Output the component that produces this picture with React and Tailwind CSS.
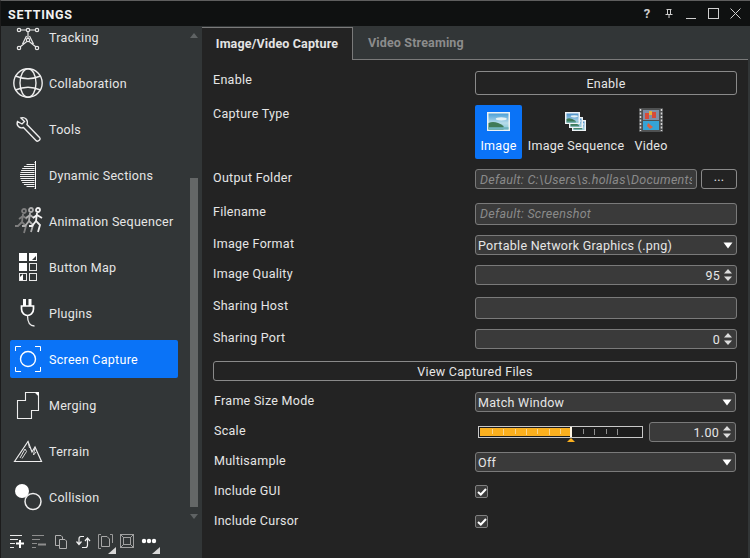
import React from "react";

const W = { fill: "none", stroke: "#e8e8e8", strokeWidth: 1.2 };

const Ic = ({ children }) => (
  <svg width="34" height="34" viewBox="0 0 34 34" className="shrink-0">{children}</svg>
);

const stripes = [];
for (let y = 4; y <= 30; y += 2) {
  const d = Math.sqrt(Math.max(0, 169 - (y - 17) * (y - 17))) * 14 / 13;
  stripes.push(`M${(24 - d).toFixed(1)} ${y + 0.5}H24.5`);
}

const icons = {
  tracking: (
    <Ic>
      <g {...W}>
        <path d="M10.500 10H16M20 10H25.500M18 12V18M16.800 21.500L10 27M19.200 21.500L26 27M16.500 16L12.500 24M19.500 16L23.500 24" />
        <circle cx="9" cy="10" r="1.700" /><circle cx="27" cy="10" r="1.700" /><circle cx="18" cy="10" r="1.700" />
        <circle cx="18" cy="20" r="1.700" /><circle cx="9" cy="28" r="1.700" /><circle cx="27" cy="28" r="1.700" />
      </g>
    </Ic>
  ),
  collab: (
    <Ic>
      <g fill="none" stroke="#eeeeee" strokeWidth="1.400">
        <circle cx="18" cy="17" r="14.200" /><ellipse cx="18" cy="17" rx="8" ry="14.200" />
        <path d="M5.500 10Q18 15.500 30.500 10M5.500 24Q18 18.500 30.500 24" />
      </g>
    </Ic>
  ),
  tools: (
    <Ic>
      <path d="M11 6L14.500 9.500L12 12L7.500 9.500C6 13.500 9.500 17 13.500 15.500L26 28.500C28 30.500 31.500 27 29.500 25.500L17 12.500C18.500 8 15 4.500 11 6Z" fill="none" stroke="#eeeeee" strokeWidth="1.400" />
    </Ic>
  ),
  dynamic: (
    <Ic>
      <path d={stripes.join("")} stroke="#f2f2f2" strokeWidth="1" />
      <path d="M25.500 3V31" stroke="#ffffff" strokeWidth="1" />
    </Ic>
  ),
  anim: (
    <Ic>
      <g fill="none" strokeWidth="1.800" transform="translate(4 3)">
        <g stroke="#7e7e7e"><circle cx="10" cy="4" r="2" /><path d="M9 7L8 15L12 19L10 26M8 15L4 19H1M9 9L13 12M9 9L5 12" /></g>
        <g stroke="#adadad"><circle cx="17" cy="3" r="2" /><path d="M16 6L15 14L19 18L17 25M15 14L11 19H8M16 8L20 11M16 8L12 11" /></g>
        <g stroke="#f0f0f0"><circle cx="24" cy="3" r="2" /><path d="M23 6L22 14L26 18L24 25M22 14L18 19H15M23 8L28 11M23 8L19 11" /></g>
      </g>
    </Ic>
  ),
  button: (
    <Ic>
      <rect x="9" y="3" width="8" height="8" fill="#fff" />
      <rect x="19" y="3" width="8" height="8" fill="#fff" /><path d="M22 10L26 6V10Z" fill="#323637" />
      <rect x="9" y="13" width="8" height="8" fill="#fff" />
      <rect x="19.500" y="13.500" width="7" height="7" fill="none" stroke="#e8e8e8" />
      <rect x="9.500" y="23.500" width="7" height="7" fill="none" stroke="#e8e8e8" /><path d="M10 30V27L13 24V30Z" fill="#fff" />
      <rect x="19.500" y="23.500" width="7" height="7" fill="none" stroke="#e8e8e8" />
    </Ic>
  ),
  plug: (
    <Ic>
      <path d="M13 3H16V10H13ZM18.500 3H21.500V10H18.500Z" fill="#fff" />
      <path d="M11.500 10H23.500V13C23.500 17.500 20 19.500 17.500 19.500C15 19.500 11.500 17.500 11.500 13Z" fill="none" stroke="#fff" strokeWidth="1.700" />
      <path d="M17.500 19.500C17.500 26 20 30 24.500 30" fill="none" stroke="#e8e8e8" strokeWidth="1.300" />
    </Ic>
  ),
  capture: (
    <Ic>
      <path d="M5.500 9V4.500H11M25 4.500H30.500V9M5.500 25V29.500H11M25 29.500H30.500V25" fill="none" stroke="#fff" strokeWidth="1" />
      <circle cx="18" cy="17" r="7.500" fill="none" stroke="#fff" strokeWidth="1.400" />
    </Ic>
  ),
  merging: (
    <Ic>
      <path d="M15.500 4.500H25.500L28.500 7.500V22.500H21.500V30.500H7.500V12.500H15.500Z" fill="none" stroke="#eeeeee" strokeWidth="1.100" />
      <path d="M25 4H29V8Z" fill="#fff" />
    </Ic>
  ),
  terrain: (
    <Ic>
      <path d="M4.500 27.500L18 7.500L22 18L25 13L31.500 27.500Z" fill="none" stroke="#eeeeee" strokeWidth="1.200" />
      <path d="M10 24L15 15L16.500 17.500L12 24.500M18 7.500L19.500 14M25 13L23.500 21L26 18" fill="none" stroke="#dddddd" strokeWidth="1" />
    </Ic>
  ),
  collision: (
    <Ic>
      <circle cx="12" cy="11" r="7" fill="#fff" />
      <circle cx="23" cy="21.500" r="8" fill="none" stroke="#eeeeee" strokeWidth="1.500" />
    </Ic>
  ),
};

const items = [
  ["Tracking", icons.tracking],
  ["Collaboration", icons.collab],
  ["Tools", icons.tools],
  ["Dynamic Sections", icons.dynamic],
  ["Animation Sequencer", icons.anim],
  ["Button Map", icons.button],
  ["Plugins", icons.plug],
  ["Screen Capture", icons.capture, true],
  ["Merging", icons.merging],
  ["Terrain", icons.terrain],
  ["Collision", icons.collision],
];

const T = ({ children, className = "" }) => <span className={"mt-[2px] " + className}>{children}</span>;

const Row = ({ label, top, h = 20, lx = "w-[262px]", children }) => (
  <div className="flex items-start" style={{ height: h, marginTop: top }}>
    <div className={"pt-px leading-4 shrink-0 " + lx}>{label}</div>
    {children}
  </div>
);

const box = "border border-[#7a7a7a] rounded-[3px] bg-[#3a3a3a] h-5 flex items-center";

const Arrows = () => (
  <svg width="10" height="14" viewBox="0 0 10 14" className="shrink-0">
    <path d="M5 1L9 5.500H1Z" fill="#dddddd" /><path d="M1 8.500H9L5 13Z" fill="#dddddd" />
  </svg>
);

const Spin = ({ value, className = "w-[262px]" }) => (
  <div className={box + " justify-end pr-[3px] gap-[3px] " + className}>
    <T>{value}</T>
    <Arrows />
  </div>
);

const Caret = () => (
  <svg width="10" height="7" viewBox="0 0 10 7" className="shrink-0"><path d="M0.500 0.500H9.500L5 6.500Z" fill="#ffffff" /></svg>
);

const Select = ({ value, className = "w-[261px]" }) => (
  <div className={box + " justify-between pl-[2px] pr-[3px] " + className}>
    <T>{value}</T>
    <Caret />
  </div>
);

const Photo = ({ w, h, x = 0, y = 0, id }) => (
  <g transform={`translate(${x} ${y})`}>
    <rect width={w} height={h} fill="#eef2f5" />
    <rect x="1.500" y="1.500" width={w - 3} height={h - 3} fill={`url(#${id})`} />
    <ellipse cx={w * 0.62} cy={h * 0.36} rx={w * 0.24} ry={h * 0.09} fill="#e4f2f6" />
    <path d={`M1.500 ${h * 0.58}Q${w * 0.35} ${h * 0.42} ${w * 0.72} ${h * 0.74}V${h - 1.500}H1.500Z`} fill="#3f7a57" />
    <rect x="1.500" y={h * 0.8} width={w - 3} height={h * 0.2 - 1.500} fill="#6fb4bf" />
  </g>
);

function ImgIcon() {
  return (
    <svg width="24" height="19" viewBox="0 0 24 19" className="shrink-0">
      <defs><linearGradient id="sky1" x1="0" y1="0" x2="0" y2="1"><stop offset="0" stopColor="#4a9fd8" /><stop offset="0.6" stopColor="#b8dcea" /><stop offset="1" stopColor="#7cc4d6" /></linearGradient></defs>
      <Photo w={23} h={19} id="sky1" />
    </svg>
  );
}

function SeqIcon() {
  return (
    <svg width="22" height="20" viewBox="0 0 22 20" className="shrink-0">
      <defs><linearGradient id="sky2" x1="0" y1="0" x2="0" y2="1"><stop offset="0" stopColor="#4a8fc8" /><stop offset="1" stopColor="#b8dcea" /></linearGradient></defs>
      <Photo w={14} h={11} x={7} y={8} id="sky2" />
      <Photo w={14} h={11} x={4} y={5} id="sky2" />
      <Photo w={15} h={12} x={0} y={0} id="sky2" />
    </svg>
  );
}

function VideoIcon() {
  return (
    <svg width="24" height="24" viewBox="0 0 24 24" className="shrink-0">
      <rect x="0" y="0" width="24" height="24" fill="#4f5152" />
      <path d="M1.500 1V23M22.500 1V23" stroke="#d8d8d8" strokeWidth="1.500" strokeDasharray="2 1.500" />
      <rect x="4" y="2" width="16" height="10" fill="#7f8fa8" />
      <rect x="4" y="13" width="16" height="9" fill="#35a3d6" />
      <path d="M6 5H10V11H6ZM13 4H17V10H13Z" fill="#d64a3a" />
      <path d="M10 3H13V7H10Z" fill="#e3b23c" />
      <path d="M9 15L14 19L11 21L8 18Z" fill="#e0603a" />
    </svg>
  );
}

function Toolbar() {
  const s = { fill: "none", strokeWidth: 1 };
  return (
    <div className="flex items-start h-[30px] shrink-0 pl-[9px] pt-[5px]">
      <svg width="180" height="22" viewBox="0 0 180 22">
        <path d="M0 2.500H12M0 6.500H8M0 10.500H5M0 14.500H4" stroke="#e8e8e8" {...s} />
        <path d="M6 10.500H14M10 7V15" stroke="#fff" strokeWidth="2" />
        <path d="M22 2.500H34M22 6.500H30M22 10.500H27M22 14.500H26" stroke="#8e8e8e" {...s} />
        <path d="M28 11.500H36" stroke="#8e8e8e" strokeWidth="2" />
        <path d="M45.500 2.500H51L52.500 4V12.500H45.500Z" stroke="#b0b0b0" {...s} />
        <path d="M49.500 6.500H55L56.500 8V15.500H49.500Z" stroke="#b0b0b0" fill="#323637" />
        <path d="M74 3.500H71Q69 3.500 69 6V11M66.500 8.500L69 11.500L71.500 8.500M72 14.500H75.500Q77.500 14.500 77.500 12V6M75 8L77.500 5L80 8" stroke="#f0f0f0" fill="none" strokeWidth="1.200" />
        <path d="M91 1.500H88.500V15.500H91M100 1.500H102.500V10" stroke="#9a9a9a" {...s} />
        <path d="M91.500 3.500H97L99.500 6V13.500H91.500Z" stroke="#a8a8a8" {...s} />
        <path d="M106 21H98L106 14Z" fill="#d8d8d8" />
        <rect x="110.500" y="1.500" width="13" height="13" stroke="#a0a0a0" {...s} />
        <rect x="113.500" y="4.500" width="7" height="7" stroke="#a0a0a0" {...s} />
        <path d="M110.500 1.500L113.500 4.500M123.500 1.500L120.500 4.500M110.500 14.500L113.500 11.500M123.500 14.500L120.500 11.500" stroke="#a0a0a0" {...s} />
        <circle cx="134" cy="8" r="2.200" fill="#fff" /><circle cx="139" cy="8" r="2.200" fill="#fff" /><circle cx="144" cy="8" r="2.200" fill="#fff" />
        <path d="M150 21H142L150 14Z" fill="#d8d8d8" />
      </svg>
    </div>
  );
}

const ticks = [0, 1, 2, 3, 4, 5, 6, 8, 9, 10, 11];

export default function App() {
  return (
    <div
      className="w-[750px] h-[558px] overflow-hidden flex flex-col bg-[#323637] text-[#e6e6e6] text-[12.500px] leading-4 tracking-[0.28px] border-t border-t-[#5e5e5e] border-l border-l-[#1c1c1c]"
      style={{ fontFamily: "Roboto, 'Liberation Sans', sans-serif" }}
    >
      <div className="h-[25px] shrink-0 bg-[#0f1111] flex items-center justify-between pl-[7px] pr-[9px]">
        <T className="font-bold text-[12.500px] tracking-[0.700px] text-[#f2f2f2]">SETTINGS</T>
        <div className="flex items-center">
          <span className="w-[8px] font-bold text-[13px] text-center text-[#cfcfcf] mr-[14px] tracking-normal">?</span>
          <svg width="8" height="9" viewBox="0 0 8 9" className="mr-[13px]"><path d="M1.500 0.500H6.500M2.500 0.500V5.500H5.500V0.500M0.500 5.500H7.500M4 5.500V9" stroke="#cfcfcf" fill="none" /></svg>
          <svg width="10" height="10" viewBox="0 0 10 10" className="mr-[12px]"><path d="M0 9.500H10" stroke="#cfcfcf" /></svg>
          <svg width="11" height="11" viewBox="0 0 11 11" className="mr-[11px]"><rect x="0.500" y="0.500" width="10" height="10" stroke="#cfcfcf" fill="none" /></svg>
          <svg width="11" height="11" viewBox="0 0 11 11"><path d="M0.500 0.500L10.500 10.500M10.500 0.500L0.500 10.500" stroke="#cfcfcf" /></svg>
        </div>
      </div>

      <div className="flex flex-1 min-h-0 pt-px">
        <aside className="w-[201px] shrink-0 flex flex-col">
          <div className="flex flex-1 min-h-0">
            <div className="w-[189px] overflow-hidden">
              <div className="-mt-[9px] pl-[9px] flex flex-col gap-2">
                {items.map(([label, icon, active]) => (
                  <div key={label} className={"h-[38px] w-[168px] shrink-0 flex items-center rounded-[2px] " + (active ? "bg-[#0a73f7] text-white" : "")}>
                    <div className="w-[39px] shrink-0 flex items-center">{icon}</div>
                    <T>{label}</T>
                  </div>
                ))}
              </div>
            </div>
            <div className="w-[8px] flex flex-col items-center pt-[6px]">
              <svg width="8" height="5" viewBox="0 0 8 5" className="shrink-0"><path d="M4 0L8 5H0Z" fill="#5f6364" /></svg>
              <div className="w-[8px] h-[329px] shrink-0 bg-[#646767] mt-[140px]" />
              <svg width="8" height="5" viewBox="0 0 8 5" className="shrink-0 mt-[7px]"><path d="M0 0H8L4 5Z" fill="#5f6364" /></svg>
            </div>
          </div>
          <Toolbar />
        </aside>

        <main className="w-[546px] shrink-0 flex flex-col bg-[#232323]">
          <div className="h-[33px] shrink-0 flex bg-[#323637] tracking-[0.150px]">
            <div className="w-[151px] h-[33px] flex items-center justify-center bg-[#232323] border-t border-r border-[#7a7a7a] font-bold text-[#e4e4e4]">Image/Video Capture</div>
            <div className="flex-1 h-[33px] border-b border-[#7a7a7a] flex items-center pl-[15px] font-bold text-[#8c8c8c]">Video Streaming</div>
          </div>

          <div className="pl-[11px]">
            <Row label="Enable" top={11} h={24}>
              <div className="w-[262px] h-6 border border-[#8a8a8a] rounded-[3px] flex items-center justify-center"><T>Enable</T></div>
            </Row>
            <Row label="Capture Type" top={10} h={54}>
              <div className="flex">
                <div className="w-[47px] h-[54px] rounded-[2px] bg-[#0a73f7] text-white flex flex-col items-center pt-[7px]">
                  <ImgIcon />
                  <span className="mt-[7px]">Image</span>
                </div>
                <div className="ml-[6px] w-[96px] h-[54px] flex flex-col items-center pt-[7px]">
                  <SeqIcon />
                  <span className="mt-[6px] whitespace-nowrap">Image Sequence</span>
                </div>
                <div className="ml-[11px] w-[32px] h-[54px] flex flex-col items-center pt-[3px]">
                  <VideoIcon />
                  <span className="mt-[6px]">Video</span>
                </div>
              </div>
            </Row>
            <Row label="Output Folder" top={10}>
              <div className={box + " w-[222px] px-1 italic text-[#8a8a8a]"}>
                <T className="block flex-1 min-w-0 overflow-hidden whitespace-nowrap">Default: C:\Users\s.hollas\Documents</T>
              </div>
              <div className="w-[36px] h-5 ml-1 border border-[#8a8a8a] rounded-[3px] flex items-center justify-center"><span className="-mt-[4px]">...</span></div>
            </Row>
            <Row label="Filename" top={14} h={22}>
              <div className={box + " !h-[22px] w-[262px] pl-1 italic text-[#8a8a8a]"}><span>Default: Screenshot</span></div>
            </Row>
            <Row label="Image Format" top={10}>
              <Select value="Portable Network Graphics (.png)" className="w-[262px]" />
            </Row>
            <Row label="Image Quality" top={10}><Spin value="95" /></Row>
            <Row label="Sharing Host" top={12} h={22}><div className={box + " !h-[22px] w-[262px]"} /></Row>
            <Row label="Sharing Port" top={10}><Spin value="0" /></Row>
            <div className="h-5 mt-3 w-[524px] border border-[#8a8a8a] rounded-[3px] flex items-center justify-center"><T>View Captured Files</T></div>
            <div className="pl-px">
              <Row label="Frame Size Mode" top={11} lx="w-[261px]"><Select value="Match Window" /></Row>
              <Row label="Scale" top={10} lx="w-[264px]">
                <div className="relative w-[165px] h-3 mt-1 border border-[#c8c8c8] bg-[#1c1c1c] p-px">
                  <div className="h-full w-[90px] bg-[#fbb01f]" />
                  {ticks.map((i) => (
                    <div
                      key={i}
                      className={i < 7 ? "absolute top-[2px] w-px bg-[#f9d48c]" : "absolute top-[2px] w-px bg-[#8f8f8f]"}
                      style={{ left: Math.round(13 + i * 11.35), height: i % 2 ? 6 : 5 }}
                    />
                  ))}
                  <div className="absolute left-[91px] top-0 w-[2px] h-full bg-[#fff6e4]" />
                  <svg width="8" height="4" viewBox="0 0 8 4" className="absolute left-[88px] top-[11px]"><path d="M4 0L8 4H0Z" fill="#fbb01f" /></svg>
                </div>
                <div className="ml-[6px]"><Spin value="1.00" className="w-[87px]" /></div>
              </Row>
              <Row label="Multisample" top={10} lx="w-[261px]"><Select value="Off" /></Row>
              {["Include GUI", "Include Cursor"].map((l) => (
                <Row key={l} label={l} top={10} lx="w-[261px]">
                  <div className="w-[13px] h-[13px] mt-[3px] rounded-[2px] border border-[#808080] bg-[#3a3a3a] flex items-center justify-center">
                    <svg width="10" height="8" viewBox="0 0 10 8"><path d="M1 4L3.800 6.500L9 1" fill="none" stroke="#fff" strokeWidth="2" /></svg>
                  </div>
                </Row>
              ))}
            </div>
          </div>
        </main>
      </div>
    </div>
  );
}
